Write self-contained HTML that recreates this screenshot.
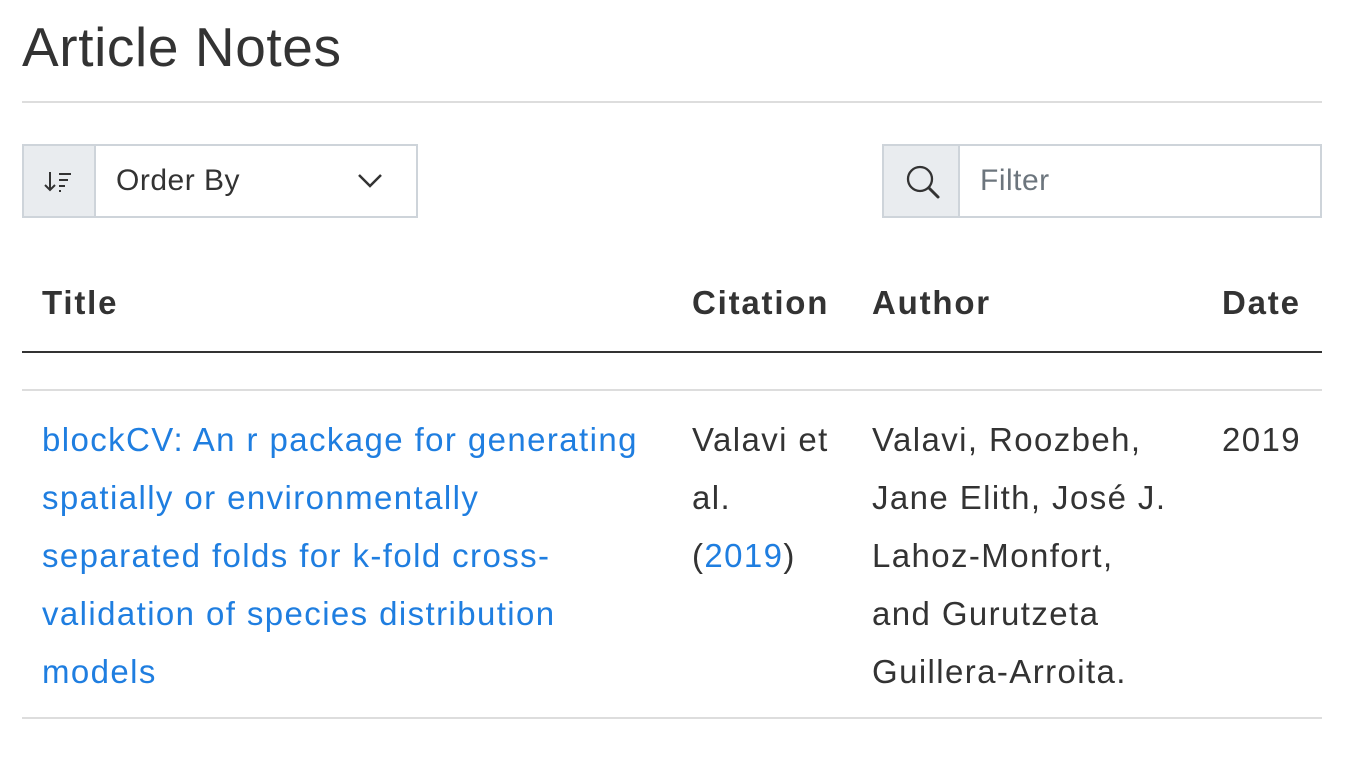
<!DOCTYPE html>
<html><head><meta charset="utf-8"><style>
body{margin:0;width:1358px;height:782px;background:#fff;font-family:"Liberation Sans",sans-serif;color:#333;position:relative;overflow:hidden}
.a{position:absolute;white-space:nowrap}
h1{position:absolute;left:22px;top:12px;margin:0;font-weight:400;font-size:55px;line-height:70px;color:#333;letter-spacing:0.6px}
.hr{position:absolute;left:22px;width:1300px;background:#ddd;height:2px}
.box{position:absolute;border:2px solid #ced4da;box-sizing:border-box;background:#fff}
.addon{position:absolute;top:0;bottom:0;left:0;background:#e9ecef;border-right:2px solid #ced4da}
.th{font-weight:700;font-size:33px;top:284px;color:#333;letter-spacing:1.8px}
.td{font-size:33px;line-height:58px;top:411px;color:#333;letter-spacing:1.4px}
.lnk{color:#1f7ee0}
</style></head><body>
<h1>Article Notes</h1>
<div class="hr" style="top:101px"></div>

<div class="box" style="left:22px;top:144px;width:396px;height:74px">
 <div class="addon" style="width:70px">
  <svg width="70" height="70" viewBox="0 0 70 70" style="position:absolute;left:0;top:0"><g stroke="#333" stroke-width="2" fill="none"><path d="M26 26v18M21 39l5 5 5-5"/><path d="M35 28h12M35 34h9M35 40h6M35 45h2"/></g></svg>
 </div>
 <div class="a" style="left:92px;top:18px;font-size:30px;color:#333;letter-spacing:0.5px">Order By</div>
 <svg width="30" height="20" style="position:absolute;left:332px;top:26px"><path d="M3 3l11 11 11-11" stroke="#333" stroke-width="2.5" fill="none"/></svg>
</div>

<div class="box" style="left:882px;top:144px;width:440px;height:74px">
 <div class="addon" style="width:74px">
  <svg width="74" height="70" style="position:absolute;left:0;top:0"><circle cx="36" cy="33" r="12" stroke="#333" stroke-width="2.3" fill="none"/><path d="M45 42l9 9" stroke="#333" stroke-width="3" stroke-linecap="round"/></svg>
 </div>
 <div class="a" style="left:96px;top:18px;font-size:30px;color:#6c757d;letter-spacing:0.5px">Filter</div>
</div>

<div class="a th" style="left:42px">Title</div>
<div class="a th" style="left:692px">Citation</div>
<div class="a th" style="left:872px">Author</div>
<div class="a th" style="left:1222px">Date</div>
<div class="hr" style="top:351px;background:#333"></div>
<div class="hr" style="top:389px"></div>

<div class="a td lnk" style="left:42px">blockCV: An r package for generating<br>spatially or environmentally<br>separated folds for k-fold cross-<br>validation of species distribution<br>models</div>
<div class="a td" style="left:692px">Valavi et<br>al.<br>(<span class="lnk">2019</span>)</div>
<div class="a td" style="left:872px">Valavi, Roozbeh,<br>Jane Elith, José J.<br>Lahoz-Monfort,<br>and Gurutzeta<br>Guillera-Arroita.</div>
<div class="a td" style="left:1222px">2019</div>
<div class="hr" style="top:717px"></div>
</body></html>
